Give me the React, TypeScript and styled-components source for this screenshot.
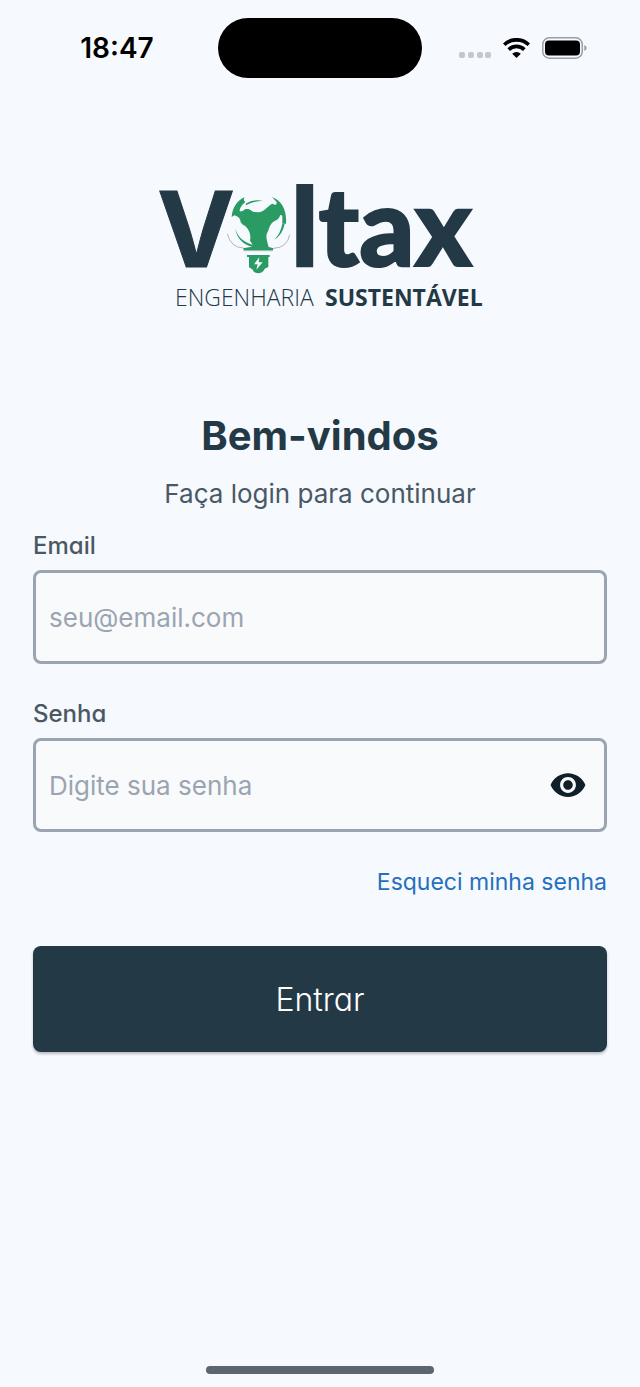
import React, { useState } from "react";
import styled, { createGlobalStyle } from "styled-components";
import { MdVisibility, MdVisibilityOff } from "react-icons/md";

const color = {
  page: "#f6f9fe",
  navy: "#233946",
  green: "#299b63",
  text: "#4a5864",
  muted: "#9aa5b1",
  field: "#f9fafc",
  link: "#2470bd",
};

const GlobalStyle = createGlobalStyle`
  * { box-sizing: border-box; }
  body {
    margin: 0;
    background: ${color.page};
    font-family: Inter, "Liberation Sans", sans-serif;
  }
`;

const Screen = styled.div`
  display: flex;
  flex-direction: column;
  min-height: 100vh;
  background: ${color.page};
`;

const StatusBar = styled.header`
  display: grid;
  grid-template-columns: 1fr auto 1fr;
  align-items: center;
  padding-top: 18px;
`;

const Clock = styled.time`
  padding-left: 16px;
  text-align: center;
  font-size: 28px;
  line-height: 32px;
  font-weight: 600;
  color: #000;
`;

const Island = styled.div`
  width: 204px;
  height: 60px;
  border-radius: 30px;
  background: #000;
`;

const StatusIcons = styled.div`
  display: flex;
  align-items: center;
  justify-content: flex-end;
  gap: 12px;
  padding-right: 53px;
`;

const Content = styled.main`
  display: flex;
  flex-direction: column;
  padding: 70px 33px 48px;
`;

const LogoMark = styled.svg`
  display: block;
  align-self: center;
`;

const Title = styled.h1`
  margin: 92px 0 18px;
  text-align: center;
  font-size: 40px;
  line-height: 48px;
  font-weight: 700;
  color: ${color.navy};
`;

const Subtitle = styled.p`
  margin: 0 0 20px;
  text-align: center;
  font-size: 26px;
  line-height: 32px;
  color: ${color.text};
`;

const Form = styled.form`
  display: flex;
  flex-direction: column;
`;

const Field = styled.div`
  display: flex;
  flex-direction: column;
  gap: 8px;
  margin-bottom: 34px;
`;

const Label = styled.label`
  font-size: 24px;
  line-height: 32px;
  font-weight: 450;
  font-feature-settings: "cv11";
  color: ${color.text};
`;

const InputBox = styled.div`
  display: flex;
  align-items: center;
  height: 94px;
  padding-right: 17px;
  border: 3px solid ${color.muted};
  border-radius: 8px;
  background: ${color.field};
`;

const Input = styled.input`
  flex: 1;
  min-width: 0;
  height: 100%;
  padding: 0 13px;
  border: 0;
  outline: 0;
  background: transparent;
  font-family: inherit;
  font-size: 26px;
  color: ${color.navy};
  &::placeholder {
    color: ${color.muted};
    opacity: 1;
  }
`;

const EyeButton = styled.button`
  display: flex;
  padding: 0;
  border: 0;
  background: none;
  color: #10202a;
  cursor: pointer;
`;

const ForgotLink = styled.a`
  align-self: flex-end;
  margin-bottom: 48px;
  font-size: 23px;
  line-height: 32px;
  color: ${color.link};
  text-decoration: none;
`;

const SubmitButton = styled.button`
  height: 106px;
  border: 0;
  border-radius: 8px;
  background: ${color.navy};
  box-shadow: 0 2px 3px rgba(0, 0, 0, 0.25);
  font-family: inherit;
  font-size: 32px;
  font-weight: 300;
  font-feature-settings: "cv11";
  color: #fff;
  cursor: pointer;
`;

const HomeIndicator = styled.div`
  align-self: center;
  width: 228px;
  height: 8px;
  margin: auto 0 13px;
  border-radius: 4px;
  background: #5d666f;
`;

function SignalDots() {
  return (
    <svg width="32" height="20" viewBox="0 0 32 20" fill="#c2c8cf" aria-hidden="true">
      {[0, 9, 18, 26].map((x) => (
        <rect key={x} x={x} y="14" width="6" height="6" rx="2" />
      ))}
    </svg>
  );
}

function Wifi() {
  return (
    <svg width="27" height="20" viewBox="0 0 27 20" aria-hidden="true">
      <g fill="none" stroke="#000" strokeWidth="3.7">
        <path d="M1.2 6.8a17.6 17.6 0 0 1 24.6 0" />
        <path d="M5.7 11.6a11.2 11.2 0 0 1 15.6 0" />
      </g>
      <path d="M13.5 20l-4.3-4.2a6.2 6.2 0 0 1 8.6 0z" />
    </svg>
  );
}

function Battery() {
  return (
    <svg width="45" height="22" viewBox="0 0 45 22" aria-hidden="true">
      <rect x="0.8" y="0.8" width="39.4" height="20.4" rx="6.5" fill="none" stroke="#969fa8" strokeWidth="1.5" />
      <rect x="3" y="3.4" width="35" height="15" rx="4" />
      <path d="M42.3 8q2.4 1 2.4 3t-2.4 3z" fill="#969fa8" />
    </svg>
  );
}

function Logo() {
  return (
    <LogoMark width="334" height="172" viewBox="-2 -30 334 172" role="img" aria-label="Voltax Engenharia Sustentável">
      <g fill={color.navy} stroke={color.navy}>
        <text
          x="41"
          y="89"
          textAnchor="middle"
          fontFamily="Inter, sans-serif"
          fontWeight="700"
          fontSize="104"
          strokeWidth="1"
        >
          V
        </text>
        <text x="136" y="88" fontFamily="Lato, sans-serif" fontWeight="900" fontSize="108" strokeWidth="2">
          ltax
        </text>
      </g>
      <g fill={color.navy} fontFamily="'Open Sans', 'Noto Sans', sans-serif" fontSize="23">
        <text x="20" y="128" fontWeight="300">ENGENHARIA</text>
        <text x="170" y="128" fontWeight="700">SUSTENTÁVEL</text>
      </g>
      <g transform="translate(-15 -8) scale(0.33333)">
        <g fill={color.green}>
          <path d="M275 141C277 112 292 91 314 81Q308 91 316 96C304 106 298 116 299 124Q306 126 312 120Q318 114 330 119Q341 130 360 127C374 124 382 107 404 105Q411 104 410 96L396 81C424 91 441 118 438 161L427 161L427 139Q425 132 419 137Q417 148 405 152C388 160 388 178 381 190C376 202 383 219 386 231L401 235L398 241L312 241L309 235L336 230Q341 226 330 212C335 190 323 170 309 164Q301 160 305 150Q299 137 285 135Z" />
          <path d="M396 101C412 104 420 118 419 139Q413 150 400 154L370 160L340 150L302 158Q303 143 284 136L300 125Q308 127 314 120Q320 116 330 120Q342 130 360 127Q373 124 380 115Q388 106 396 101Z" />
          <path d="M317 101Q339 87 369 92Q341 93 318 106Z" />
          <path d="M434 161Q428 194 403 209Q422 190 427 161Z" />
          <path d="M286 175Q294 213 342 226L340 232Q291 219 286 175Z" />
          <path d="M321 255H389V261H385V291L374 296Q369 309 354 310Q341 309 337 298L327 292V261H321Z" />
        </g>
        <g fill="none" stroke="#8d989c" strokeWidth="2">
          <path d="M262 191Q272 233 310 234" />
          <path d="M449 194Q442 233 401 235" />
          <path d="M310 242H399" />
        </g>
        <path d="M358 262L342 283H353L349 299L368 277H356Z" fill={color.page} />
      </g>
    </LogoMark>
  );
}

export default function App() {
  const [visible, setVisible] = useState(false);

  return (
    <Screen>
      <GlobalStyle />
      <StatusBar>
        <Clock>18:47</Clock>
        <Island />
        <StatusIcons>
          <SignalDots />
          <Wifi />
          <Battery />
        </StatusIcons>
      </StatusBar>
      <Content>
        <Logo />
        <Title>Bem-vindos</Title>
        <Subtitle>Faça login para continuar</Subtitle>
        <Form onSubmit={(event) => event.preventDefault()}>
          <Field>
            <Label htmlFor="email">Email</Label>
            <InputBox>
              <Input id="email" type="email" placeholder="seu@email.com" />
            </InputBox>
          </Field>
          <Field>
            <Label htmlFor="password">Senha</Label>
            <InputBox>
              <Input id="password" type={visible ? "text" : "password"} placeholder="Digite sua senha" />
              <EyeButton type="button" aria-label="Mostrar senha" onClick={() => setVisible(!visible)}>
                {visible ? <MdVisibilityOff size={38} /> : <MdVisibility size={38} />}
              </EyeButton>
            </InputBox>
          </Field>
          <ForgotLink href="#senha">Esqueci minha senha</ForgotLink>
          <SubmitButton type="submit">Entrar</SubmitButton>
        </Form>
      </Content>
      <HomeIndicator />
    </Screen>
  );
}
